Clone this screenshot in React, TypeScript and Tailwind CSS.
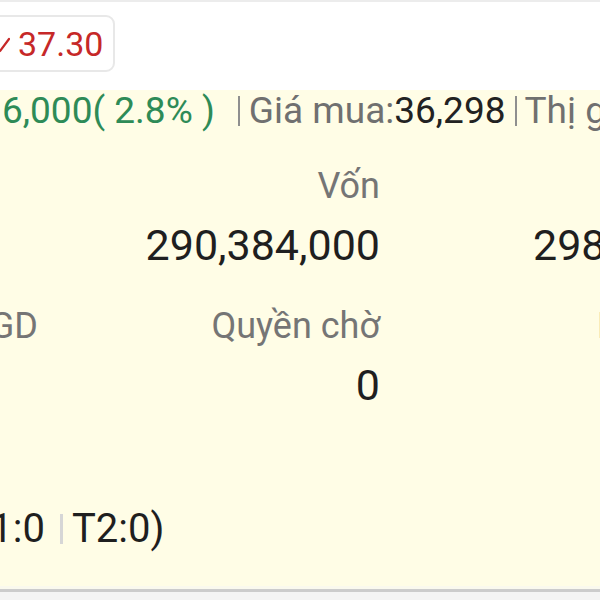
import React from "react";

const font = { fontFamily: "Roboto, 'Noto Sans', sans-serif" };

export default function App() {
  return (
    <div className="w-[600px] h-[600px] overflow-hidden bg-[#f3f3f3] flex flex-col" style={font}>
      {/* top white bar */}
      <div className="h-[90px] shrink-0 bg-white border-t-2 border-[#ececec] flex items-start">
        <div className="ml-[-22px] mt-[13px] h-[57px] rounded-[9px] border-2 border-[#e8e8e8] flex items-center pl-[10px] pr-[10px] gap-[8px] text-[#c62828] text-[34px] leading-none whitespace-nowrap shrink-0">
          <svg width="20" height="16" viewBox="0 0 20 16" className="mt-[2px] shrink-0">
            <polyline points="1,3 10,14 19,2" fill="none" stroke="#c62828" strokeWidth="2.2" strokeLinecap="round" strokeLinejoin="round" />
          </svg>
          <span>37.30</span>
        </div>
      </div>

      {/* yellow panel */}
      <div className="h-[499px] shrink-0 bg-[#fffde6] flex flex-col border-b-[3px] border-[#faf9ee]">
        {/* header line */}
        <div className="h-[42px] flex items-center whitespace-nowrap text-[37px] leading-[42px] pl-[2px]">
          <span className="shrink-0 text-[#2e8b57]">6,000( 2.8% )</span>
          <span className="shrink-0 ml-[23px] mr-[9px] inline-block w-[2px] h-[30px] bg-[#8f8f8f]"></span>
          <span className="shrink-0 text-[#707070]">Giá mua:</span>
          <span className="shrink-0 text-[#222222]">36,298</span>
          <span className="shrink-0 ml-[9px] mr-[8px] inline-block w-[2px] h-[30px] bg-[#8f8f8f]"></span>
          <span className="shrink-0 text-[#707070]">Thị giá:</span>
        </div>

        {/* row A labels */}
        <div className="mt-[30px] h-[48px] flex whitespace-nowrap text-[36px] leading-[48px] text-[#757575]">
          <div className="w-[37px] shrink-0 flex justify-end"></div>
          <div className="w-[343px] shrink-0 flex justify-end">Vốn</div>
          <div className="shrink-0 pl-[230px]">Giá trị</div>
        </div>
        {/* row A values */}
        <div className="h-[70px] flex whitespace-nowrap text-[43px] leading-[70px] text-[#1f1f1f]">
          <div className="w-[37px] shrink-0 flex justify-end"></div>
          <div className="w-[343px] shrink-0 flex justify-end">290,384,000</div>
          <div className="shrink-0 pl-[153px]">298,000,000</div>
        </div>

        {/* row B labels */}
        <div className="mt-[22px] h-[48px] flex whitespace-nowrap text-[36px] leading-[48px] text-[#757575]">
          <div className="w-[38px] shrink-0 flex justify-end">Chờ GD</div>
          <div className="w-[342px] shrink-0 flex justify-end">Quyền chờ</div>
          <div className="shrink-0 pl-[217px]">Lãi/Lỗ</div>
        </div>
        {/* row B values */}
        <div className="h-[70px] flex whitespace-nowrap text-[43px] leading-[70px] text-[#1f1f1f]">
          <div className="w-[37px] shrink-0 flex justify-end"></div>
          <div className="w-[343px] shrink-0 flex justify-end">0</div>
        </div>

        {/* bottom line */}
        <div className="mt-[84px] h-[50px] flex items-center whitespace-nowrap text-[40px] leading-[50px] text-[#1f1f1f]">
          <div className="w-[45px] shrink-0 flex justify-end">(T1:0</div>
          <span className="shrink-0 ml-[15px] mr-[9px] inline-block w-[3px] h-[30px] bg-[#d6d6d6]"></span>
          <span className="shrink-0">T2:0)</span>
        </div>
      </div>
      <div className="h-[3px] shrink-0 bg-[#cccccc]"></div>
      <div className="flex-1 bg-[#f4f4f4]"></div>
    </div>
  );
}
